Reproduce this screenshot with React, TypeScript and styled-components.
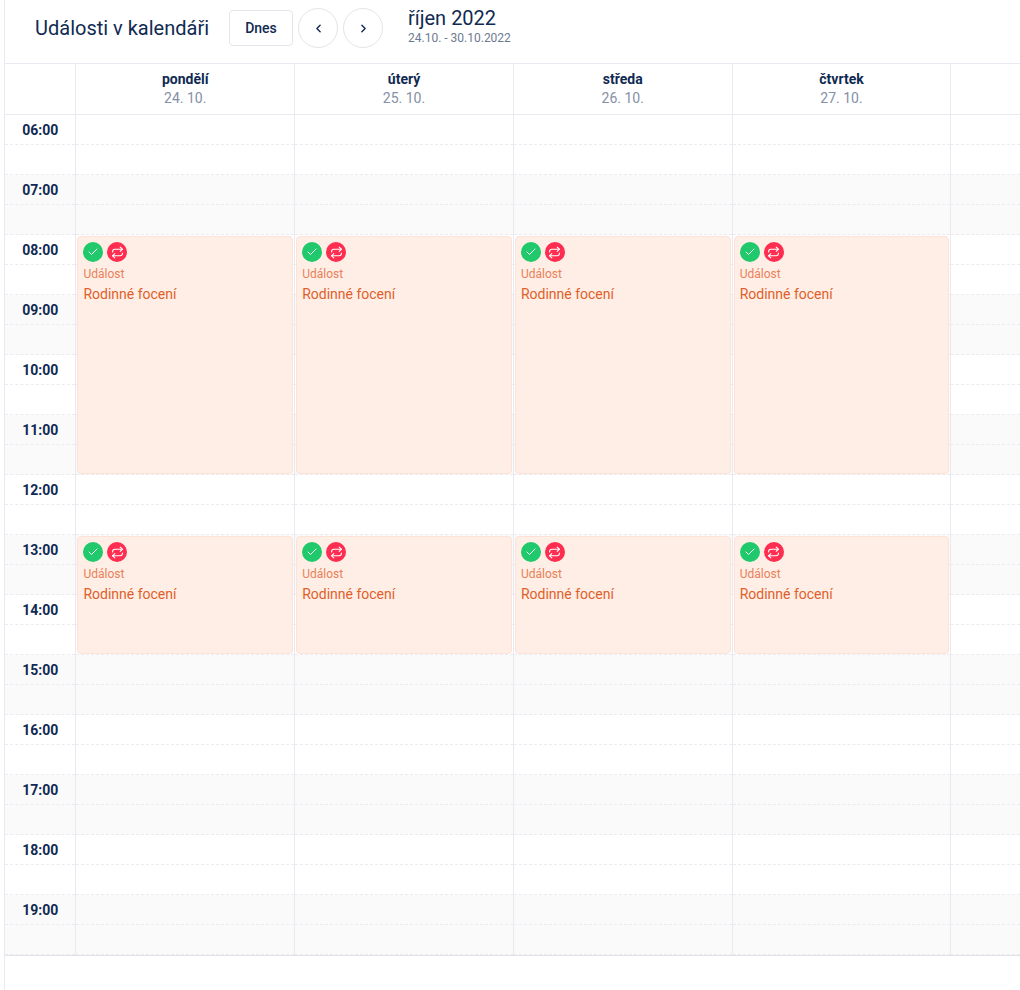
import React from "react";
import styled, { createGlobalStyle } from "styled-components";
import { Check, ChevronLeft, ChevronRight, Repeat } from "lucide-react";

const GlobalStyle = createGlobalStyle`
  html, body {
    margin: 0;
    padding: 0;
    background: #fff;
    overflow: hidden;
  }
  body {
    font-family: Roboto, "Liberation Sans", sans-serif;
    color: #102a52;
  }
`;

const Page = styled.div`
  height: 990px;
  margin-left: 4px;
  border-left: 1px solid #e9e9f2;
  overflow: hidden;
  box-sizing: border-box;
`;

const Toolbar = styled.div`
  height: 63px;
  display: flex;
  align-items: center;
  padding: 0 0 7px 30px;
  box-sizing: border-box;
`;

const Title = styled.h1`
  width: 194px;
  margin: 0;
  font-size: 20px;
  font-weight: 400;
  line-height: 24px;
  white-space: nowrap;
`;

const TodayButton = styled.button`
  width: 64px;
  height: 36px;
  margin-right: 5px;
  padding: 0;
  background: #fff;
  border: 1px solid #e4e4ea;
  border-radius: 4px;
  color: #102a52;
  font: 500 14px Roboto, sans-serif;
`;

const RoundButton = styled.button`
  width: 40px;
  height: 40px;
  margin-right: 5px;
  padding: 0;
  display: flex;
  align-items: center;
  justify-content: center;
  background: #fff;
  border: 1px solid #e4e4ea;
  border-radius: 50%;
  color: #102a52;
`;

const Period = styled.div`
  align-self: flex-start;
  margin-left: 20px;
  padding-top: 6px;
`;

const Month = styled.div`
  font-size: 20px;
  line-height: 24px;
`;

const Range = styled.div`
  margin-top: 1px;
  font-size: 12px;
  line-height: 14px;
  color: #6d7a91;
`;

const Calendar = styled.div`
  display: flex;
  border-top: 1px solid #e9e9f2;
  border-bottom: 1px solid #e2e2e8;
`;

const TimeColumn = styled.div`
  flex: 0 0 70.4px;
`;

const DayColumn = styled.div`
  flex: 0 0 218.75px;
  box-sizing: border-box;
  border-left: 1px solid #e9e9f2;

  &:last-child {
    flex: 1 1 0;
  }
`;

const DayHead = styled.div`
  height: 51px;
  box-sizing: border-box;
  border-bottom: 1px solid #e9e9f2;
  padding-top: 7px;
  text-align: center;
`;

const DayName = styled.div`
  font-size: 14px;
  font-weight: 700;
  line-height: 17px;
`;

const DayDate = styled.div`
  margin-top: 2px;
  font-size: 14px;
  line-height: 17px;
  color: #8490a5;
`;

const Slots = styled.div`
  position: relative;
`;

const Hour = styled.div<{ $shaded: boolean }>`
  height: 60px;
  background: ${props => (props.$shaded ? "#fafafb" : "#fff")};
`;

const HalfHour = styled.div`
  height: 30px;
  box-sizing: border-box;
  border-bottom: 1px dashed #ebebf1;
`;

const Label = styled.div`
  height: 30px;
  box-sizing: border-box;
  padding-top: 7px;
  border-bottom: 1px dashed #ebebf1;
  font-size: 14px;
  font-weight: 700;
  line-height: 17px;
  text-align: center;
`;

const Event = styled.div<{ $top: number; $height: number }>`
  position: absolute;
  top: ${props => props.$top}px;
  left: 1px;
  right: 1px;
  height: ${props => props.$height}px;
  box-sizing: border-box;
  padding: 5px;
  background: #ffeee6;
  border: 1px solid #fce2d7;
  border-radius: 4px;
`;

const Badges = styled.div`
  display: flex;
  gap: 4px;
`;

const Badge = styled.span<{ $color: string }>`
  width: 20px;
  height: 20px;
  display: flex;
  align-items: center;
  justify-content: center;
  border-radius: 50%;
  background: ${props => props.$color};
  color: #fff;
`;

const EventType = styled.div`
  margin-top: 5px;
  font-size: 12px;
  line-height: 14px;
  color: #e98058;
`;

const EventName = styled.div`
  margin-top: 5px;
  font-size: 14px;
  line-height: 17px;
  color: #df5f2a;
`;

const hours = ["06:00", "07:00", "08:00", "09:00", "10:00", "11:00", "12:00", "13:00", "14:00", "15:00", "16:00", "17:00", "18:00", "19:00"];

const days = [
  { name: "pondělí", date: "24. 10.", events: true },
  { name: "úterý", date: "25. 10.", events: true },
  { name: "středa", date: "26. 10.", events: true },
  { name: "čtvrtek", date: "27. 10.", events: true },
  { name: "", date: "", events: false },
];

const events = [
  { top: 121, height: 238 },
  { top: 421, height: 118 },
];

export default function App() {
  return (
    <Page>
      <GlobalStyle />
      <Toolbar>
        <Title>Události v kalendáři</Title>
        <TodayButton>Dnes</TodayButton>
        <RoundButton>
          <ChevronLeft size={13} strokeWidth={2.6} />
        </RoundButton>
        <RoundButton>
          <ChevronRight size={13} strokeWidth={2.6} />
        </RoundButton>
        <Period>
          <Month>říjen 2022</Month>
          <Range>24.10. - 30.10.2022</Range>
        </Period>
      </Toolbar>
      <Calendar>
        <TimeColumn>
          <DayHead />
          {hours.map((hour, i) => (
            <Hour key={hour} $shaded={i % 2 === 1}>
              <Label>{hour}</Label>
              <HalfHour />
            </Hour>
          ))}
        </TimeColumn>
        {days.map(day => (
          <DayColumn key={day.name}>
            <DayHead>
              <DayName>{day.name}</DayName>
              <DayDate>{day.date}</DayDate>
            </DayHead>
            <Slots>
              {hours.map((hour, i) => (
                <Hour key={hour} $shaded={i % 2 === 1}>
                  <HalfHour />
                  <HalfHour />
                </Hour>
              ))}
              {day.events &&
                events.map(event => (
                  <Event key={event.top} $top={event.top} $height={event.height}>
                    <Badges>
                      <Badge $color="#20c96b">
                        <Check size={12} strokeWidth={2} />
                      </Badge>
                      <Badge $color="#ff2d4f">
                        <Repeat size={13} strokeWidth={2} />
                      </Badge>
                    </Badges>
                    <EventType>Událost</EventType>
                    <EventName>Rodinné focení</EventName>
                  </Event>
                ))}
            </Slots>
          </DayColumn>
        ))}
      </Calendar>
    </Page>
  );
}
